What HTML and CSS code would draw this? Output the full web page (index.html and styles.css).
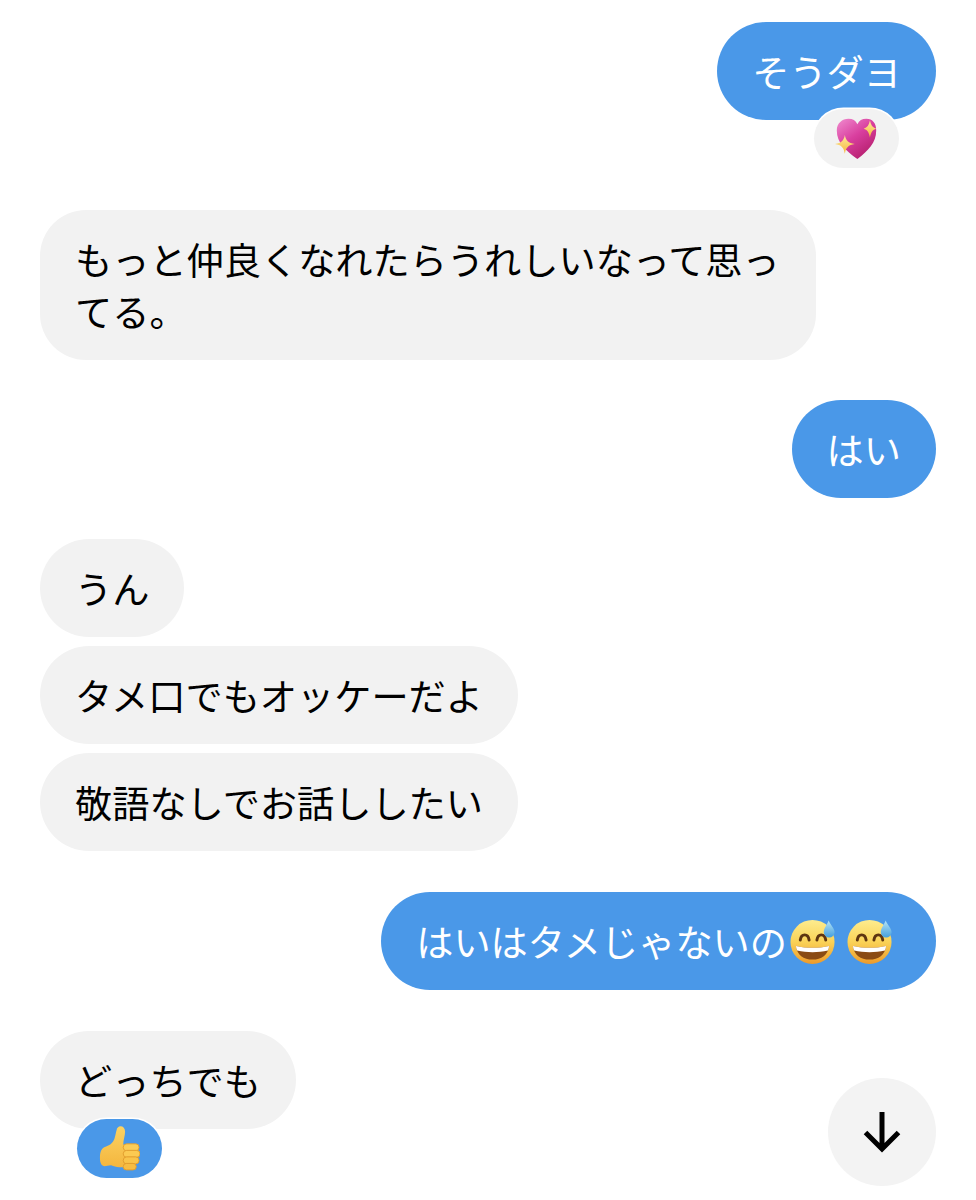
FILE: index.html
```html
<!DOCTYPE html>
<html lang="ja">
<head>
  <meta charset="UTF-8" />
  <meta name="viewport" content="width=device-width, initial-scale=1.0"/>
  <title>Chat</title>
  <link rel="stylesheet" href="styles.css">
</head>
<body>

  <!-- Shared emoji drawings -->
  <svg class="defs" width="0" height="0" aria-hidden="true">
    <defs>
      <linearGradient id="faceFill" x1="0" y1="0" x2="0" y2="1">
        <stop offset="0" stop-color="#fdec8e"/>
        <stop offset="0.5" stop-color="#fad257"/>
        <stop offset="1" stop-color="#ec9a2b"/>
      </linearGradient>
      <linearGradient id="dropFill" x1="0" y1="0" x2="0" y2="1">
        <stop offset="0" stop-color="#b5e4f6"/>
        <stop offset="1" stop-color="#459fdd"/>
      </linearGradient>
      <linearGradient id="heartFill" x1="0" y1="0" x2="0.7" y2="1">
        <stop offset="0" stop-color="#f08ccf"/>
        <stop offset="0.5" stop-color="#d93f9f"/>
        <stop offset="1" stop-color="#b41e6c"/>
      </linearGradient>
      <linearGradient id="starFill" x1="0" y1="0" x2="0" y2="1">
        <stop offset="0" stop-color="#fdeb9c"/>
        <stop offset="1" stop-color="#f6b73c"/>
      </linearGradient>
      <linearGradient id="thumbFill" x1="0" y1="0" x2="0" y2="1">
        <stop offset="0" stop-color="#fcd363"/>
        <stop offset="1" stop-color="#f4b63e"/>
      </linearGradient>
      <symbol id="grin" viewBox="0 0 48 48">
        <circle cx="23" cy="25" r="22.500" fill="url(#faceFill)"/>
        <path d="M10.500 23c1-7 8-7 9 0M27.500 23c1-7 8-7 9 0" fill="none" stroke="#5e3511" stroke-width="3" stroke-linecap="round"/>
        <path d="M6 29c11 2.500 23 2.500 34 0-1 9-8 14-17 14S7 38 6 29z" fill="#8a4b14"/>
        <path d="M6 29c11 2.500 23 2.500 34 0-.2 1.800-.7 3.400-1.300 4.800-10.200 2.200-21.200 2.200-31.400 0C6.700 32.400 6.200 30.800 6 29z" fill="#fff"/>
        <path d="M39.500 3c-2 5-5 8-5 12a5.500 5.500 0 0 0 11 0c0-4-4-7-6-12z" fill="url(#dropFill)"/>
      </symbol>
    </defs>
  </svg>

  <main class="chat">
    <div class="bubble mine first">
      そうダヨ
      <span class="reaction reaction-grey">
        <svg class="emoji-heart" viewBox="0 0 48 48">
          <path d="M25 47C12 37 2 29 2 15 2 7 8 2 15 2c5 0 8 2 10 6 2-4 5-6 10-6 7 0 11 5 11 13 0 14-9 22-21 32z" fill="url(#heartFill)"/>
          <path d="M11 20c1 6 4 9 11 10-7 1-10 4-11 11-1-7-4-10-11-11 7-1 10-4 11-10z" fill="url(#starFill)"/>
          <path d="M39 4c1 5 3 8 7 9-4 1-6 4-7 10-1-6-3-9-7-10 4-1 6-4 7-9z" fill="url(#starFill)"/>
        </svg>
      </span>
    </div>

    <div class="bubble theirs wide">もっと仲良くなれたらうれしいなって思ってる。</div>

    <div class="bubble mine">はい</div>

    <div class="group">
      <div class="bubble theirs">うん</div>
      <div class="bubble theirs">タメ口でもオッケーだよ</div>
      <div class="bubble theirs">敬語なしでお話ししたい</div>
    </div>

    <div class="bubble mine emoji-line">
      はいはタメじゃないの
      <svg class="emoji"><use href="#grin"/></svg>
      <svg class="emoji"><use href="#grin"/></svg>
    </div>

    <div class="bubble theirs">
      どっちでも
      <span class="reaction reaction-blue">
        <svg class="emoji-thumb" viewBox="0 0 44 48">
          <path d="M23 0c3 0 5 2 5 6 0 4-2 9-2 14h4v24h-8c-4 0-6-1-9-2-3 0-5 1-7 1-3 0-5-3-5-9 0-7 2-11 6-12 5-1 9-5 10-10 1-3 1-5 2-8 0-2 2-4 4-4z" fill="url(#thumbFill)"/>
          <rect x="26" y="19" width="17" height="7.500" rx="3.700" fill="#fbcd58" stroke="#e19c2c" stroke-width="1"/>
          <rect x="26" y="26" width="18" height="7.500" rx="3.700" fill="#fbca52" stroke="#e19c2c" stroke-width="1"/>
          <rect x="26" y="33" width="17" height="7.500" rx="3.700" fill="#f9c44a" stroke="#e19c2c" stroke-width="1"/>
          <rect x="26" y="40" width="14" height="7" rx="3.500" fill="#f7bd42" stroke="#e19c2c" stroke-width="1"/>
        </svg>
      </span>
    </div>
  </main>

  <button class="scroll-down" aria-label="Scroll to latest">
    <svg width="40" height="44" viewBox="0 0 40 44">
      <path d="M20 2v37M3.500 22.500 20 39l16.500-16.500" fill="none" stroke="#000" stroke-width="5"/>
    </svg>
  </button>

</body>
</html>
```

FILE: styles.css
```css
* { box-sizing: border-box; }
body {
  font-family: "Liberation Sans", "Noto Sans CJK JP", sans-serif;
  margin: 0;
  background: #fff;
  color: #000;
  height: 1200px;
  overflow: hidden;
  position: relative;
}

.defs {
  position: absolute;
}

.chat {
  display: flex;
  flex-direction: column;
  align-items: flex-start;
  gap: 41px;
  padding: 22px 40px 0;
}

.group {
  display: flex;
  flex-direction: column;
  align-items: flex-start;
  gap: 9px;
}

.bubble {
  position: relative;
  padding: 26px 35px 20px;
  border-radius: 49px;
  font-size: 37.2px;
  line-height: 52px;
  max-width: 776px;
}

.bubble.mine {
  align-self: flex-end;
  background: #4a98e8;
  color: #fff;
}

.bubble.theirs {
  background: #f2f2f2;
}

.bubble.wide {
  border-radius: 46px;
  padding-right: 33px;
  margin-bottom: -1px;
}

.bubble.first {
  margin-bottom: 49px;
}

.emoji-line {
  display: flex;
  align-items: center;
  gap: 3px;
  padding-right: 42px;
}

.emoji {
  width: 47px;
  height: 48px;
  margin-top: -6px;
}

.emoji + .emoji {
  margin-left: 7px;
}

.reaction {
  position: absolute;
  display: flex;
  align-items: center;
  justify-content: center;
  width: 85px;
  height: 59px;
  border-radius: 30px;
}

.reaction-grey {
  right: 37px;
  bottom: -48px;
  background: #f2f2f2;
  box-shadow: 0 0 0 1.5px #fff;
}

.reaction-blue {
  left: 37px;
  bottom: -49px;
  background: #4a98e8;
  box-shadow: 0 0 0 1.5px #fff;
}

.emoji-heart {
  width: 43px;
  height: 43px;
}

.emoji-thumb {
  width: 41px;
  height: 45px;
}

.scroll-down {
  position: absolute;
  left: 828px;
  top: 1078px;
  width: 108px;
  height: 108px;
  padding: 0;
  border: none;
  border-radius: 50%;
  background: #f3f3f3;
  display: flex;
  align-items: center;
  justify-content: center;
}
```
